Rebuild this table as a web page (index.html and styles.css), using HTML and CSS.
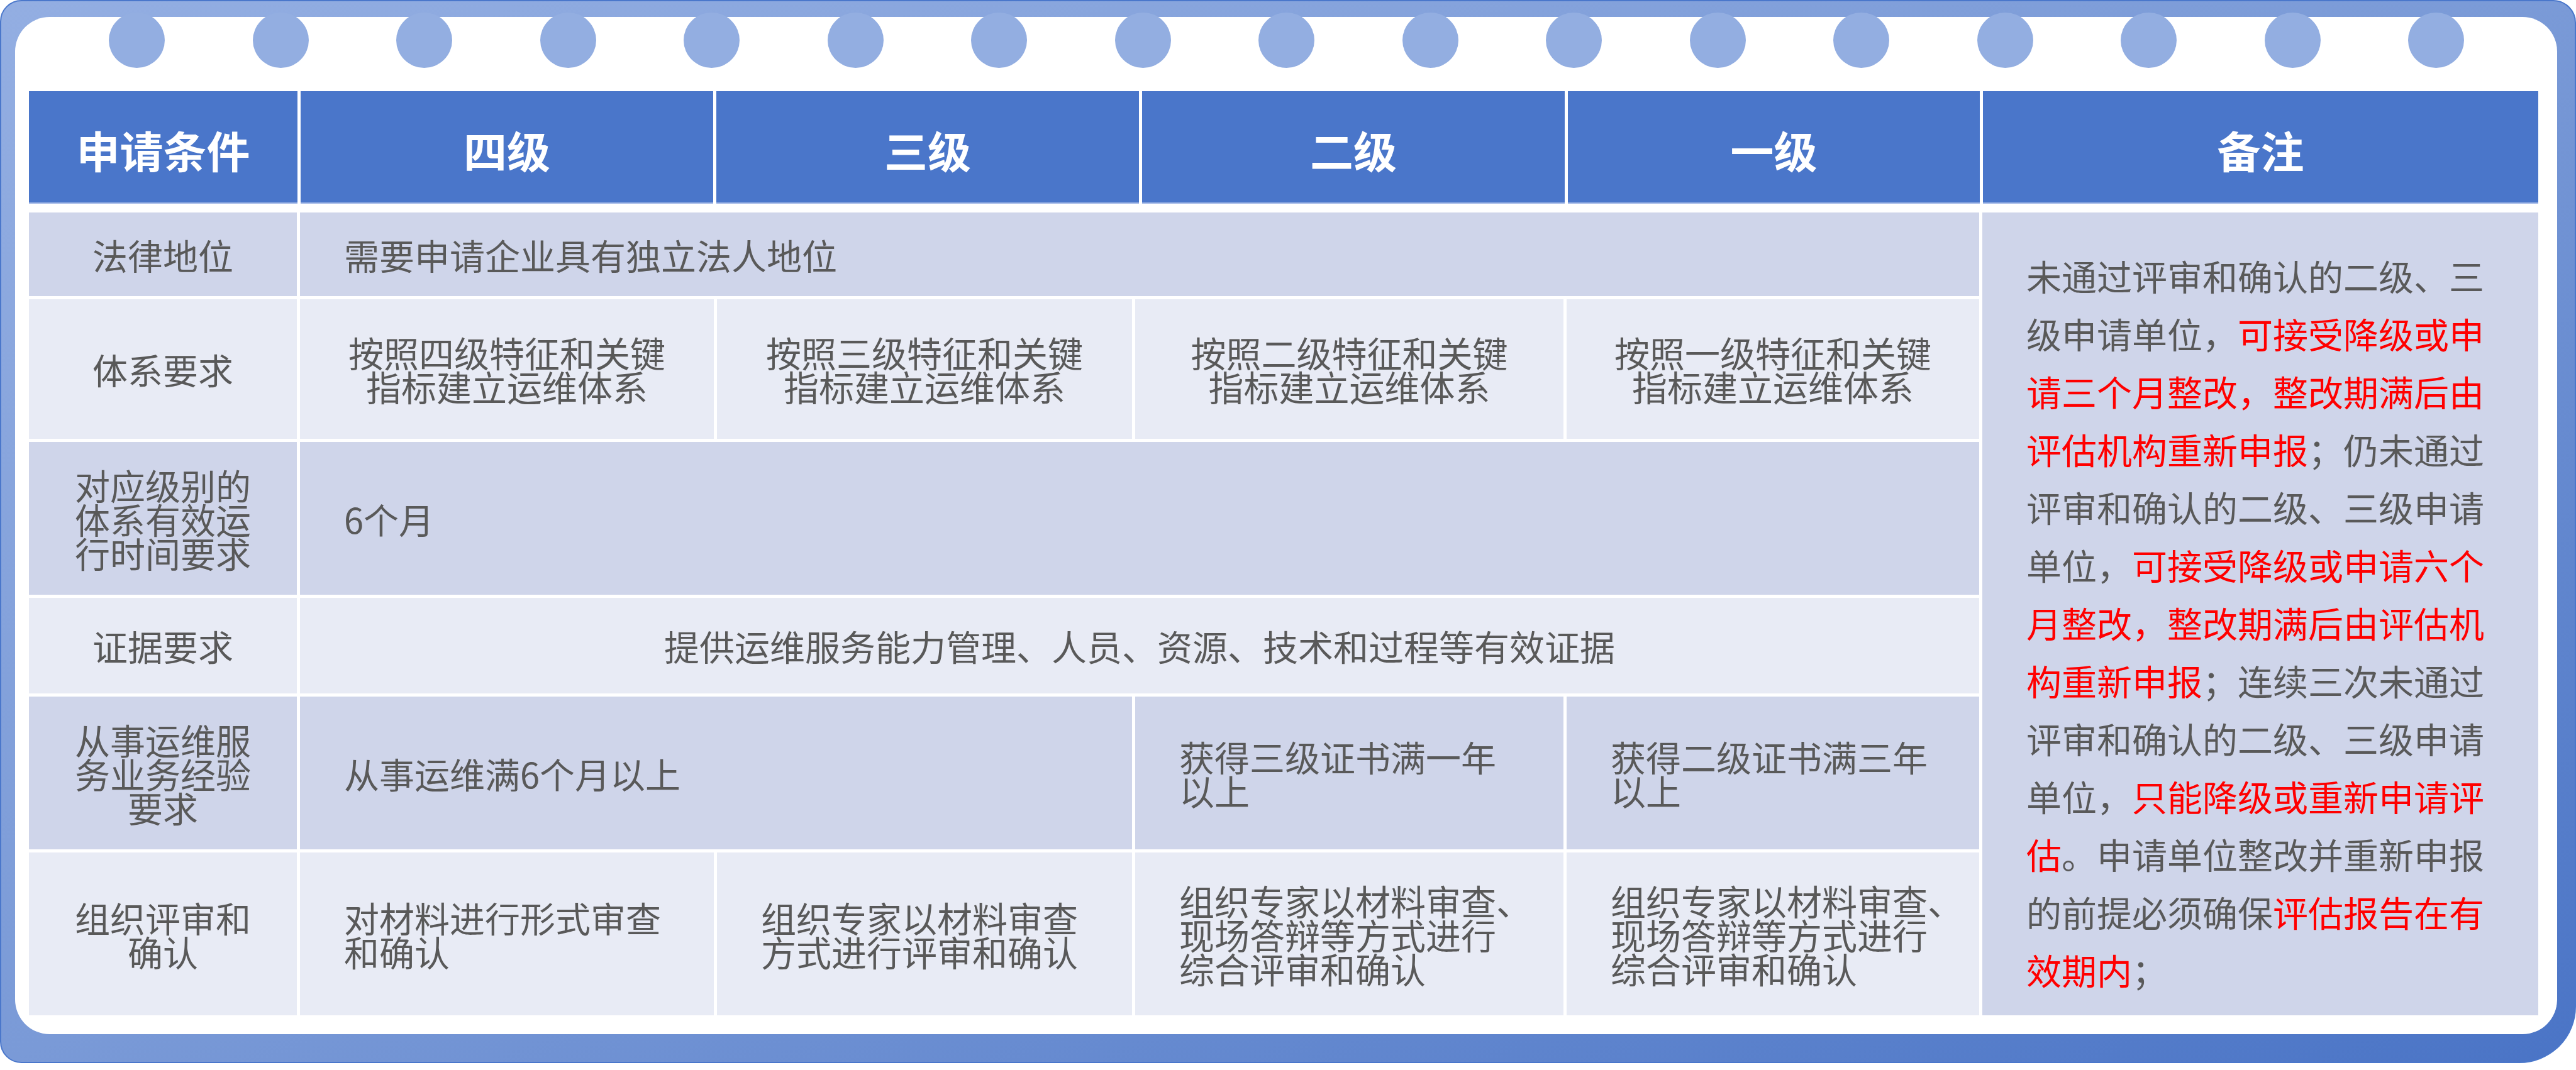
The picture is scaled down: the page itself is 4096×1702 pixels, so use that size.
FILE: index.html
```html
<!DOCTYPE html>
<html lang="zh-CN">
<head>
<meta charset="utf-8">
<title>申请条件</title>
<link rel="stylesheet" href="styles.css">
</head>
<body>
<div class="frame">
  <div class="rings">
    <span class="ring"></span><span class="ring"></span><span class="ring"></span><span class="ring"></span><span class="ring"></span><span class="ring"></span><span class="ring"></span><span class="ring"></span><span class="ring"></span><span class="ring"></span><span class="ring"></span><span class="ring"></span><span class="ring"></span><span class="ring"></span><span class="ring"></span><span class="ring"></span><span class="ring"></span>
  </div>
  <div class="panel">
    <div class="thead">
      <div class="th">申请条件</div>
      <div class="th">四级</div>
      <div class="th">三级</div>
      <div class="th">二级</div>
      <div class="th">一级</div>
      <div class="th">备注</div>
    </div>
    <div class="tbody">
      <div class="cell dark center r1">法律地位</div>
      <div class="cell dark left r1 span4">需要申请企业具有独立法人地位</div>

      <div class="cell light center r2">体系要求</div>
      <div class="cell light center r2">按照四级特征和关键<br>指标建立运维体系</div>
      <div class="cell light center r2">按照三级特征和关键<br>指标建立运维体系</div>
      <div class="cell light center r2">按照二级特征和关键<br>指标建立运维体系</div>
      <div class="cell light center r2">按照一级特征和关键<br>指标建立运维体系</div>

      <div class="cell dark center r3">对应级别的<br>体系有效运<br>行时间要求</div>
      <div class="cell dark left r3 span4">6个月</div>

      <div class="cell light center r4">证据要求</div>
      <div class="cell light center r4 span4">提供运维服务能力管理、人员、资源、技术和过程等有效证据</div>

      <div class="cell dark center r5">从事运维服<br>务业务经验<br>要求</div>
      <div class="cell dark left r5 span2">从事运维满6个月以上</div>
      <div class="cell dark left r5">获得三级证书满一年<br>以上</div>
      <div class="cell dark left r5">获得二级证书满三年<br>以上</div>

      <div class="cell light center r6">组织评审和<br>确认</div>
      <div class="cell light left r6">对材料进行形式审查<br>和确认</div>
      <div class="cell light left r6">组织专家以材料审查<br>方式进行评审和确认</div>
      <div class="cell light left r6">组织专家以材料审查、<br>现场答辩等方式进行<br>综合评审和确认</div>
      <div class="cell light left r6">组织专家以材料审查、<br>现场答辩等方式进行<br>综合评审和确认</div>

      <div class="remark">
        <p class="line">未通过评审和确认的二级、三</p>
        <p class="line">级申请单位，<span class="red">可接受降级或申</span></p>
        <p class="line"><span class="red">请三个月整改，整改期满后由</span></p>
        <p class="line"><span class="red">评估机构重新申报</span>；仍未通过</p>
        <p class="line">评审和确认的二级、三级申请</p>
        <p class="line">单位，<span class="red">可接受降级或申请六个</span></p>
        <p class="line"><span class="red">月整改，整改期满后由评估机</span></p>
        <p class="line"><span class="red">构重新申报</span>；连续三次未通过</p>
        <p class="line">评审和确认的二级、三级申请</p>
        <p class="line">单位，<span class="red">只能降级或重新申请评</span></p>
        <p class="line"><span class="red">估</span>。申请单位整改并重新申报</p>
        <p class="line">的前提必须确保<span class="red">评估报告在有</span></p>
        <p class="line"><span class="red">效期内</span>；</p>
      </div>
    </div>
  </div>
</div>
</body>
</html>
```

FILE: styles.css
```css
html, body {
  margin: 0;
  padding: 0;
  background: #ffffff;
}

body {
  font-family: "Noto Sans CJK SC", "Noto Sans", sans-serif;
  width: 4096px;
  height: 1702px;
  overflow: hidden;
}

.frame {
  position: relative;
  box-sizing: border-box;
  width: 4096px;
  border: 2px solid #4a77cb;
  border-radius: 34px 36px 90px 34px;
  padding: 25px 28px 44px 22px;
  background: linear-gradient(to bottom right, #93aee2 0%, #7a9ad7 50%, #4a74c6 100%);
}

.rings {
  position: absolute;
  top: 18px;
  left: 171px;
  width: 3745px;
  display: flex;
  justify-content: space-between;
  z-index: 2;
}

.ring {
  width: 89px;
  height: 88px;
  border-radius: 50%;
  background: #93aee1;
}

.panel {
  background: #ffffff;
  border-radius: 55px;
  padding: 118px 30px 30px 22px;
}

.thead {
  display: grid;
  grid-template-columns: 427px 656px 672px 672px 655px 883px;
  column-gap: 5px;
  height: 179px;
  margin-bottom: 14px;
}

.th {
  box-sizing: border-box;
  background: #4a76ca;
  border-bottom: 2px solid #9fb6e6;
  color: #ffffff;
  font-weight: 700;
  font-size: 69px;
  padding-top: 8px;
  display: flex;
  align-items: center;
  justify-content: center;
}

.tbody {
  display: grid;
  grid-template-columns: 426px 658px 660px 681px 656px 884px;
  grid-template-rows: 133px 222px 243px 152px 243px 259px;
  gap: 5px;
}

.cell {
  display: flex;
  align-items: center;
  color: #595959;
  font-size: 56px;
  line-height: 54px;
  white-space: nowrap;
}

.dark { background: #cfd5ea; }
.light { background: #e8ebf5; }

.center {
  justify-content: center;
  text-align: center;
}

.left {
  justify-content: flex-start;
  text-align: left;
  padding-left: 70px;
}

.span4 { grid-column: 2 / 6; }
.span2 { grid-column: 2 / 4; }

.remark {
  grid-column: 6;
  grid-row: 1 / 7;
  background: #cfd5ea;
  padding: 54px 0 0 70px;
  color: #595959;
  font-size: 56px;
  line-height: 92px;
  white-space: nowrap;
}

.line {
  margin: 0;
}

.red {
  color: #ff0000;
}
```
